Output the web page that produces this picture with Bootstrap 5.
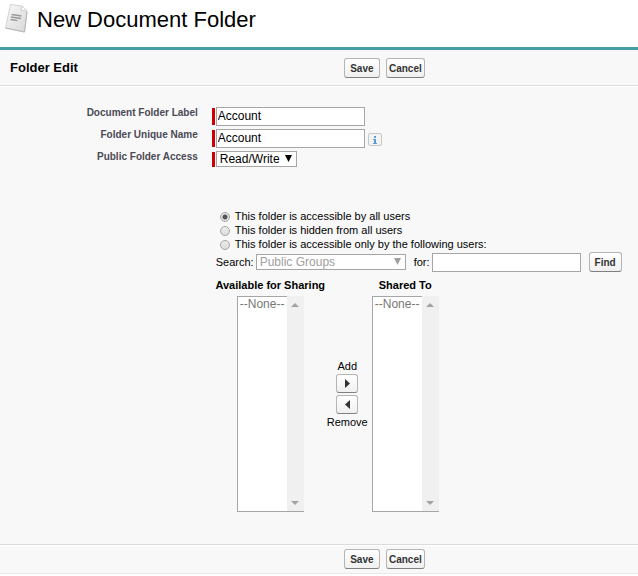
<!DOCTYPE html>
<html lang="en">
<head>
<meta charset="utf-8">
<meta name="viewport" content="width=device-width, initial-scale=1">
<title>New Document Folder</title>
<link href="https://cdn.jsdelivr.net/npm/bootstrap@5.3.0/dist/css/bootstrap.min.css" rel="stylesheet">
<style>
body{font-family:"Liberation Sans",Arial,sans-serif;font-size:11px;line-height:14px;color:#000;background:#fff}
.page-head{height:47px;padding:2px 4px}
.page-head h1{font-size:22px;line-height:36px;font-weight:400}
.edit-panel{border-top:3px solid #459ea6;border-bottom:1px solid #eaeaea;background:#f8f8f8}
.bar-top{height:36px;border-bottom:1px solid #dbdbdb}
.bar-top h2{font-size:13px;line-height:16px;font-weight:700}
.bar-bottom{height:29px;border-top:1px solid #dbdbdb;box-shadow:inset 0 1px #fff}
.bar-title{width:53.9%;padding-left:10px}
.panel-body{border-top:1px solid #fff;padding:20px 0 32px}
.sf-btn{font-size:10px;line-height:12px;font-weight:700;color:#333;height:20px;padding:2px 2px 0;border:1px solid #b5b5b5;border-bottom-color:#7f7f7f;border-radius:3px;background:linear-gradient(#fff,#f0f0f0)}
.w-save{width:36px}.w-cancel{width:39px;margin-left:6px}.w-find{width:33px}
.mini{width:22px;height:19px;padding:0}
.label-col{width:31%;font-size:10px;line-height:12px;font-weight:700;color:#4a4a56;text-align:right}
.field-row{height:22px}
.req{width:3px;background:#c00;margin:1px 1px 1px 14px}
.req-text{height:17px}.req-pick{height:15px}
.txt{width:149px;height:19px;border:1px solid #a6a6a6;background:#fff;font-size:12px;line-height:15px;padding:0 1px 1px;color:#000;border-radius:0}
.pick-wrap{position:relative}
.pick{appearance:none;height:16px;border:1px solid #a6a6a6;background:#fff;border-radius:0;font-size:12px;line-height:14px;padding:0 3px;color:#000;display:block;opacity:1}
.pick:disabled{color:#a0a0a0}
.pick-wrap svg{position:absolute;right:5px;top:4px;pointer-events:none}
.w-access{width:81px}.w-group{width:150px}
.info{width:14px;height:13px;border:1px solid #c8c8c8;border-radius:2px;background:#f3f3f3;padding:0;margin-left:3px}
.sharing{padding-left:calc(31% + 18px);padding-top:36px}
.choice{height:14px}
.choice input{appearance:none;width:10px;height:10px;margin:3px 5px 0 4px;border:1px solid #a5a5a5;border-radius:50%;background:linear-gradient(#ececec,#ddd)}
.choice input:checked{background:radial-gradient(circle,#555 0 2px,#e6e6e6 3px)}
.search-row{height:22px}
.search-row label{margin-right:2px}
.lists{margin-top:5px}
.list-col{width:109px}
.list-col-b{width:71px}
.lists h3{font-size:11px;line-height:14px;font-weight:700;margin:0 0 4px;white-space:nowrap}
.list-box{width:67px;height:216px;border-left:1px solid #a6a6a6;border-bottom:1px solid #a6a6a6}
.list-box select{width:49px;height:215px;border:0;border-top:1px solid #a6a6a6;border-radius:0;background:#fff;color:#777;font-size:12px;line-height:14px;padding:0;overflow:hidden;outline:0;appearance:none;opacity:1}
.list-box option{padding:0 0 0 2px;min-height:14px;color:#777}
.scroll-rail{width:17px;background:#f0f0f0;padding:7px 0 6px}
.move-col{width:45px;padding-top:82px;gap:2px;line-height:12px}
</style>
<script src="https://cdn.jsdelivr.net/npm/bootstrap@5.3.0/dist/js/bootstrap.bundle.min.js"></script>
</head>
<body>
<header class="page-head d-flex align-items-start">
  <svg width="25" height="32" viewBox="0 0 25 32" aria-hidden="true">
    <defs><linearGradient id="paper" x2="1" y2="1"><stop stop-color="#fafafa"/><stop offset="1" stop-color="#d6d6d6"/></linearGradient></defs>
    <path d="M6.500 2.500 18 4l5 5-2.500 21L1.500 26Z" fill="url(#paper)" stroke="#d3d3d3"/>
    <path d="M18 4l5 5-6-.5Z" fill="#fff" stroke="#c4c4c4" stroke-width=".8"/>
    <path d="M1.500 26 20.500 30 23 10" stroke="#b5b5b5" fill="none"/>
    <path d="m7.500 12.500 10 1.500M7 15l10 1.500M6.500 17.500l7 1.200" stroke="#999" stroke-width="1.300"/>
  </svg>
  <h1 class="m-0 ms-2">New Document Folder</h1>
</header>
<main>
<form class="edit-panel">
  <div class="bar-top d-flex align-items-center">
    <div class="bar-title"><h2 class="m-0">Folder Edit</h2></div>
    <button type="button" class="sf-btn w-save">Save</button>
    <button type="button" class="sf-btn w-cancel">Cancel</button>
  </div>
  <div class="panel-body">
    <div class="field-row d-flex align-items-start">
      <label class="label-col" for="lbl">Document Folder Label</label><span class="req req-text"></span>
      <input class="txt" id="lbl" type="text" value="Account">
    </div>
    <div class="field-row d-flex align-items-start">
      <label class="label-col" for="uname">Folder Unique Name</label><span class="req req-text"></span>
      <input class="txt" id="uname" type="text" value="Account">
      <button type="button" class="info d-flex justify-content-center align-items-center mt-1" aria-label="Information">
        <svg width="6" height="8" viewBox="0 0 6 8"><path d="M2 0h2v2H2zM1 3h3v4h1v1H1V7h1V4H1z" fill="#5b9bd5"/></svg>
      </button>
    </div>
    <div class="field-row d-flex align-items-start">
      <label class="label-col" for="access">Public Folder Access</label><span class="req req-pick"></span>
      <div class="pick-wrap">
        <select class="pick w-access" id="access"><option>Read/Write</option></select>
        <svg width="7" height="7" viewBox="0 0 7 7"><path d="M0 0h7L3.500 7z" fill="#000"/></svg>
      </div>
    </div>
    <div class="sharing">
      <div class="choice d-flex"><input type="radio" name="share" id="s1" checked><label for="s1">This folder is accessible by all users</label></div>
      <div class="choice d-flex"><input type="radio" name="share" id="s2"><label for="s2">This folder is hidden from all users</label></div>
      <div class="choice d-flex"><input type="radio" name="share" id="s3"><label for="s3">This folder is accessible only by the following users:</label></div>
      <div class="search-row d-flex align-items-center">
        <label for="grp">Search:</label>
        <div class="pick-wrap">
          <select class="pick w-group" id="grp" disabled><option>Public Groups</option></select>
          <svg width="7" height="7" viewBox="0 0 7 7"><path d="M0 0h7L3.500 7z" fill="#a0a0a0"/></svg>
        </div>
        <label for="find" class="ms-2">for:</label>
        <input class="txt" id="find" type="text">
        <button type="button" class="sf-btn w-find ms-2">Find</button>
      </div>
      <div class="lists d-flex">
        <div class="list-col d-flex flex-column align-items-center">
          <h3 id="h-av">Available for Sharing</h3>
          <div class="list-box d-flex">
            <select multiple disabled aria-labelledby="h-av"><option>--None--</option></select>
            <div class="scroll-rail d-flex flex-column justify-content-between align-items-center">
              <svg width="8" height="4" viewBox="0 0 8 4"><path d="M4 0l4 4H0z" fill="#a3a3a3"/></svg>
              <svg width="8" height="4" viewBox="0 0 8 4"><path d="M0 0h8L4 4z" fill="#a3a3a3"/></svg>
            </div>
          </div>
        </div>
        <div class="move-col d-flex flex-column align-items-center">
          <label for="add">Add</label>
          <button type="button" id="add" class="sf-btn mini d-flex justify-content-center align-items-center"><svg width="5" height="9" viewBox="0 0 5 9"><path d="M0 0l5 4.500L0 9z" fill="#333"/></svg></button>
          <button type="button" id="rem" class="sf-btn mini d-flex justify-content-center align-items-center"><svg width="5" height="9" viewBox="0 0 5 9"><path d="M5 0v9L0 4.500z" fill="#333"/></svg></button>
          <label for="rem">Remove</label>
        </div>
        <div class="list-col-b d-flex flex-column align-items-center">
          <h3 id="h-sh">Shared To</h3>
          <div class="list-box d-flex">
            <select multiple disabled aria-labelledby="h-sh"><option>--None--</option></select>
            <div class="scroll-rail d-flex flex-column justify-content-between align-items-center">
              <svg width="8" height="4" viewBox="0 0 8 4"><path d="M4 0l4 4H0z" fill="#a3a3a3"/></svg>
              <svg width="8" height="4" viewBox="0 0 8 4"><path d="M0 0h8L4 4z" fill="#a3a3a3"/></svg>
            </div>
          </div>
        </div>
      </div>
    </div>
  </div>
  <div class="bar-bottom d-flex align-items-center">
    <div class="bar-title"></div>
    <button type="button" class="sf-btn w-save">Save</button>
    <button type="button" class="sf-btn w-cancel">Cancel</button>
  </div>
</form>
</main>
</body>
</html>
